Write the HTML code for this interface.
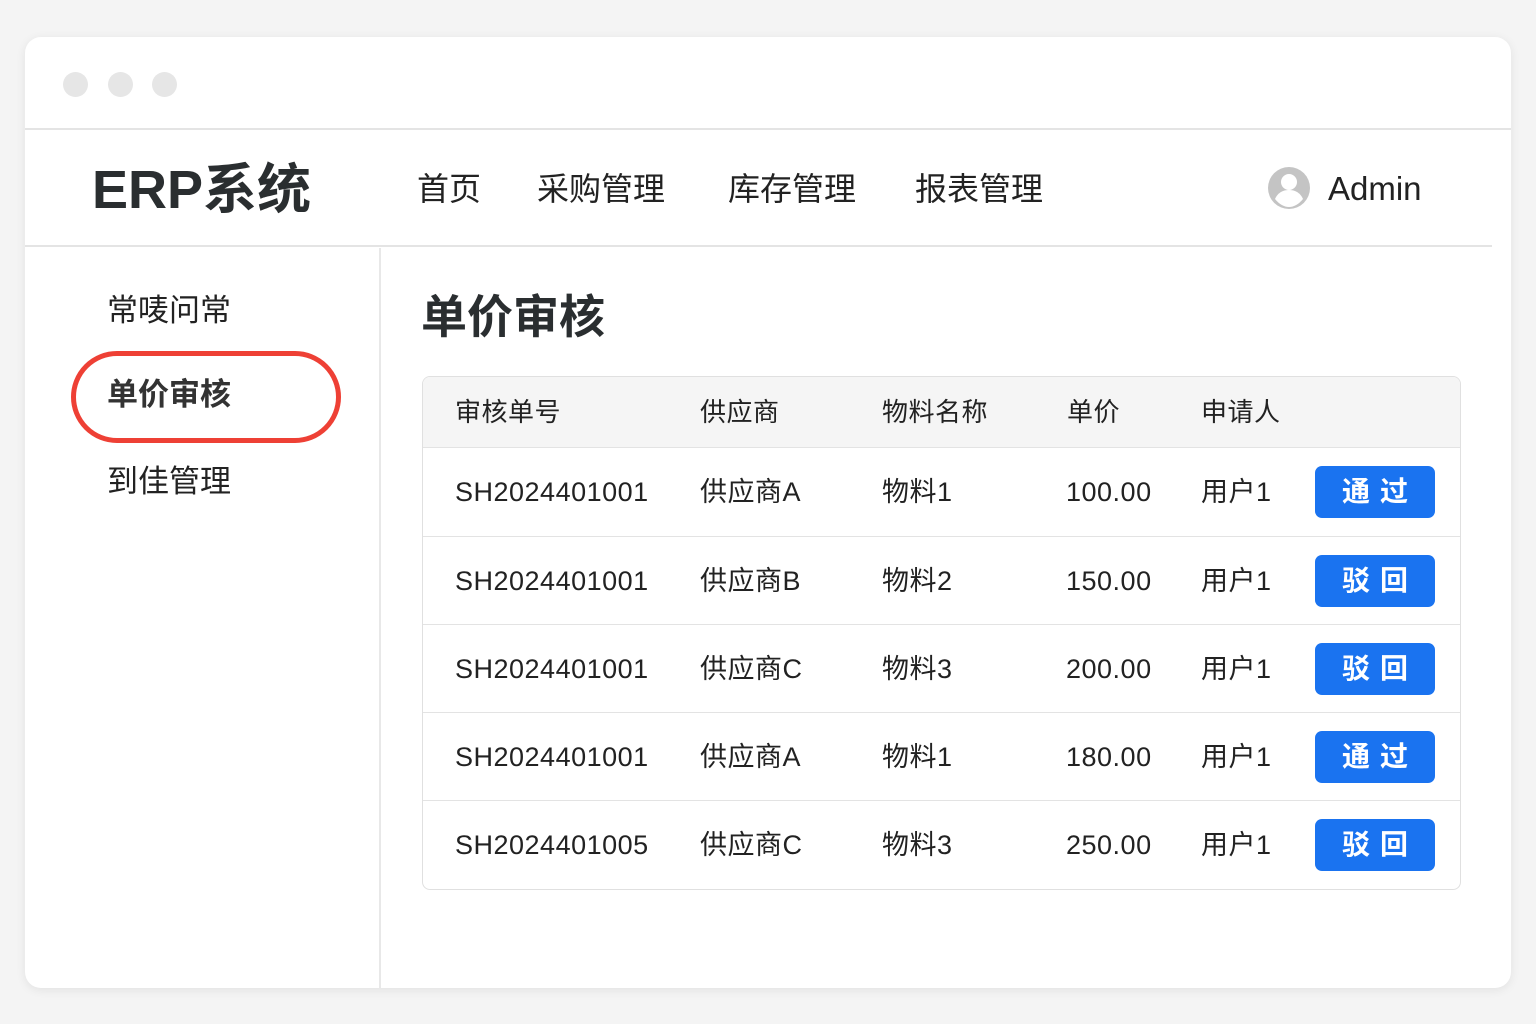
<!DOCTYPE html>
<html><head><meta charset="utf-8"><style>
*{margin:0;padding:0;box-sizing:border-box}
body{width:1536px;height:1024px;background:#f4f4f4;font-family:"Liberation Sans","Noto Sans CJK SC",sans-serif;color:#222;position:relative;overflow:hidden}
.win{position:absolute;left:25px;top:37px;width:1486px;height:951px;background:#fff;border-radius:16px;box-shadow:0 2px 10px rgba(0,0,0,.08);overflow:hidden}
.dot{position:absolute;top:35px;width:25px;height:25px;border-radius:50%;background:#e6e6e6}
.abs{position:absolute;white-space:nowrap}
.hl{position:absolute;background:#e4e4e4;height:2px}
.row{position:absolute;left:0;width:1038px;height:88px;border-top:1.5px solid #e3e3e3}
.c{position:absolute;top:0;line-height:88px;font-size:27px;color:#222;letter-spacing:.5px}
.btn{position:absolute;left:892px;top:18px;width:120px;height:52px;background:#1a73f0;border-radius:7px;color:#fff;font-size:28px;font-weight:bold;text-align:center;line-height:52px;letter-spacing:10px;padding-left:10px}
</style></head><body>
<div class="win">
<div class="dot" style="left:38px"></div><div class="dot" style="left:83px"></div><div class="dot" style="left:127px"></div>
<div class="hl" style="left:0;top:91px;width:1486px"></div>
<div class="abs" style="left:67px;top:119px;font-size:54px;font-weight:bold;color:#2a2e30;line-height:68px">ERP系统</div>
<div class="abs" style="left:392px;top:130px;font-size:32px;line-height:44px;color:#222">首页</div>
<div class="abs" style="left:512px;top:130px;font-size:32px;line-height:44px;color:#222">采购管理</div>
<div class="abs" style="left:703px;top:130px;font-size:32px;line-height:44px;color:#222">库存管理</div>
<div class="abs" style="left:890px;top:130px;font-size:32px;line-height:44px;color:#222">报表管理</div>
<svg class="abs" style="left:1242px;top:129px" width="44" height="44" viewBox="0 0 44 44"><circle cx="22" cy="22" r="21" fill="#c4c4c4"/><circle cx="22" cy="16" r="8" fill="#fff"/><path d="M8 33c3-7 9-9 14-9s11 2 14 9c-4 5-9 8-14 8s-10-3-14-8z" fill="#fff"/></svg>
<div class="abs" style="left:1303px;top:130px;font-size:33px;line-height:44px;color:#222">Admin</div>
<div class="hl" style="left:0;top:208px;width:1467px"></div>
<div style="position:absolute;left:354px;top:211px;width:2px;height:740px;background:#e8e8e8"></div>
<div class="abs" style="left:82px;top:252px;font-size:31px;line-height:44px">常唛问常</div>
<div style="position:absolute;left:46px;top:314px;width:270px;height:92px;border:5px solid #ee4035;border-radius:46px"></div>
<div class="abs" style="left:82px;top:336px;font-size:31px;line-height:44px;font-weight:bold;color:#333">单价审核</div>
<div class="abs" style="left:82px;top:423px;font-size:31px;line-height:44px">到佳管理</div>
<div class="abs" style="left:396px;top:250px;font-size:46px;font-weight:bold;line-height:60px;color:#2a2e30">单价审核</div>
<div style="position:absolute;left:397px;top:339px;width:1039px;height:514px;border:1.5px solid #e0e0e0;border-radius:8px;overflow:hidden">
 <div style="position:absolute;left:0;top:0;width:100%;height:71px;background:#f5f5f5"></div>
 <div class="c" style="left:32px;line-height:71px;font-size:26px">审核单号</div>
 <div class="c" style="left:277px;line-height:71px;font-size:26px">供应商</div>
 <div class="c" style="left:459px;line-height:71px;font-size:26px">物料名称</div>
 <div class="c" style="left:644px;line-height:71px;font-size:26px">单价</div>
 <div class="c" style="left:778px;line-height:71px;font-size:26px">申请人</div>
 <div class="row" style="top:70px"><div class="c" style="left:32px">SH2024401001</div><div class="c" style="left:277px">供应商A</div><div class="c" style="left:459px">物料1</div><div class="c" style="left:643px">100.00</div><div class="c" style="left:778px">用户1</div><div class="btn">通过</div></div>
 <div class="row" style="top:159px"><div class="c" style="left:32px">SH2024401001</div><div class="c" style="left:277px">供应商B</div><div class="c" style="left:459px">物料2</div><div class="c" style="left:643px">150.00</div><div class="c" style="left:778px">用户1</div><div class="btn">驳回</div></div>
 <div class="row" style="top:247px"><div class="c" style="left:32px">SH2024401001</div><div class="c" style="left:277px">供应商C</div><div class="c" style="left:459px">物料3</div><div class="c" style="left:643px">200.00</div><div class="c" style="left:778px">用户1</div><div class="btn">驳回</div></div>
 <div class="row" style="top:335px"><div class="c" style="left:32px">SH2024401001</div><div class="c" style="left:277px">供应商A</div><div class="c" style="left:459px">物料1</div><div class="c" style="left:643px">180.00</div><div class="c" style="left:778px">用户1</div><div class="btn">通过</div></div>
 <div class="row" style="top:423px"><div class="c" style="left:32px">SH2024401005</div><div class="c" style="left:277px">供应商C</div><div class="c" style="left:459px">物料3</div><div class="c" style="left:643px">250.00</div><div class="c" style="left:778px">用户1</div><div class="btn">驳回</div></div>
</div>
</div>
</body></html>
